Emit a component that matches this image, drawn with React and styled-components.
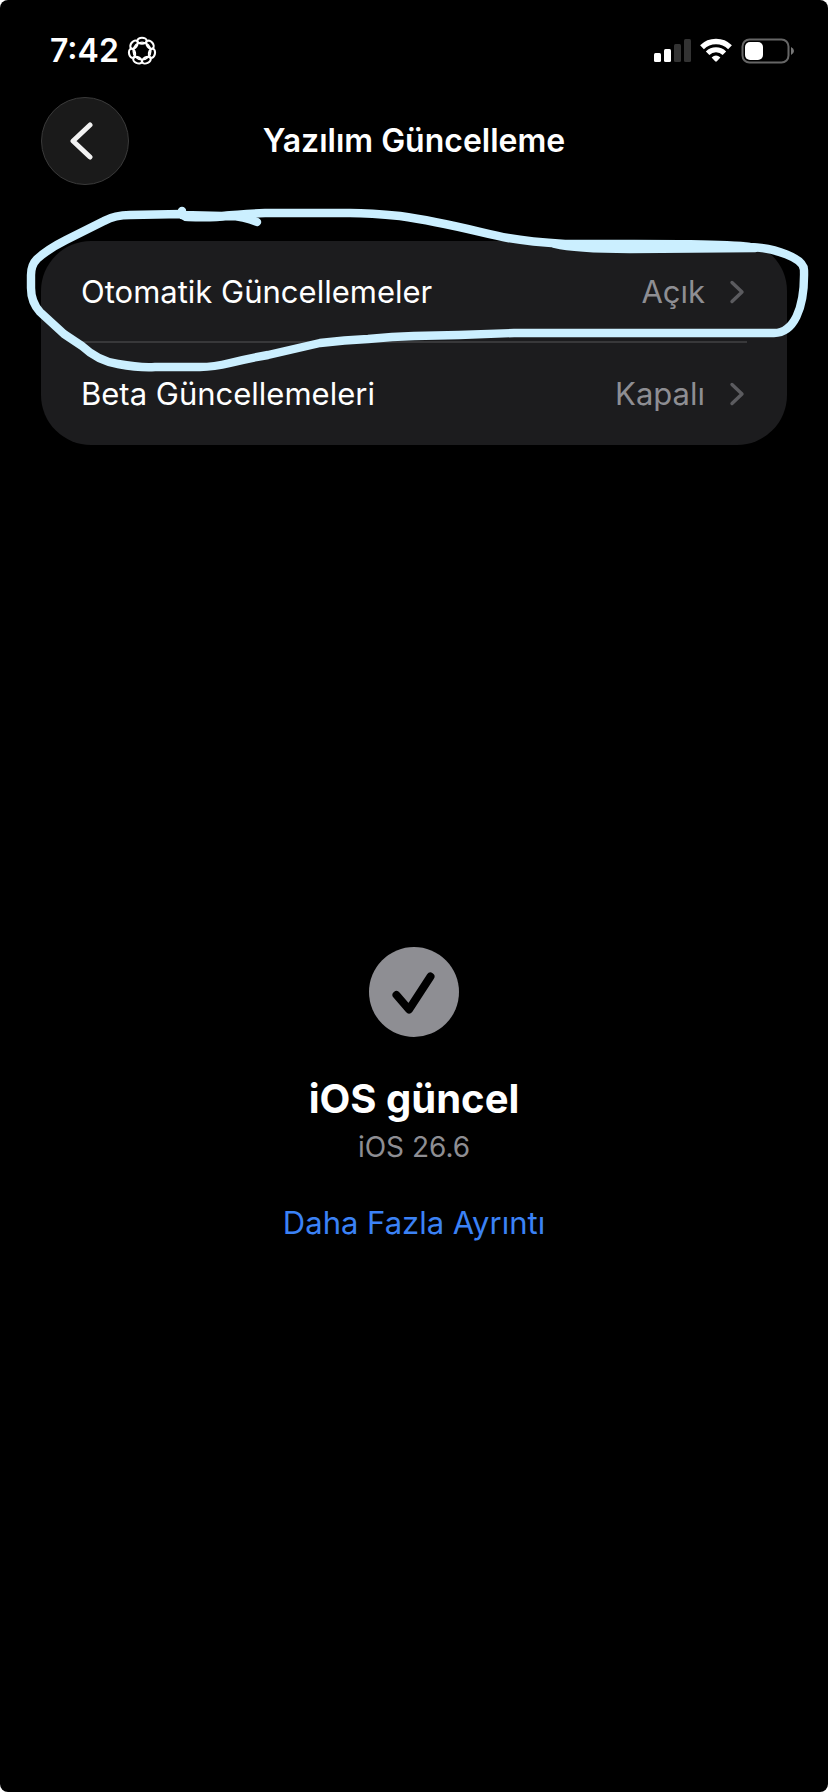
import React from "react";
import styled, { createGlobalStyle } from "styled-components";

const GlobalStyle = createGlobalStyle`
  * {
    box-sizing: border-box;
  }
  body {
    margin: 0;
    background: #fff;
    font-family: Inter, "Liberation Sans", sans-serif;
  }
`;

const rows = [
  { label: "Otomatik Güncellemeler", value: "Açık" },
  { label: "Beta Güncellemeleri", value: "Kapalı" },
];

// ring of seven rounded petals
function Rosette() {
  return (
    <svg width="30" height="30" viewBox="0 0 30 30" fill="none" stroke="#fff">
      {[0, 1, 2, 3, 4, 5, 6].map((n) => (
        <ellipse
          key={n}
          cx="15"
          cy="4.8"
          rx="4.6"
          ry="3"
          strokeWidth="2.1"
          transform={`rotate(${(n * 360) / 7} 15 15)`}
        />
      ))}
      <circle cx="15" cy="15" r="8.9" strokeWidth="1.4" />
    </svg>
  );
}

function StatusIcons() {
  return (
    <Indicators>
      <svg width="37" height="26" viewBox="0 0 37 26" fill="#fff">
        <rect x="0" y="15" width="7" height="9" rx="1.5" />
        <rect x="10" y="11" width="7" height="13" rx="1.5" />
        <rect x="20" y="6" width="7" height="18" rx="1.5" fill="#333" />
        <rect x="30" y="1" width="7" height="23" rx="1.5" fill="#333" />
      </svg>
      <svg width="32" height="26" viewBox="0 0 32 26" fill="none" stroke="#fff">
        <path d="M2 9.2A20 20 0 0 1 30 9.2" strokeWidth="5.4" />
        <path d="M7.6 15.2A12 12 0 0 1 24.4 15.2" strokeWidth="5" />
        <path
          d="M11.6 19.4Q16 15.6 20.4 19.4L16.9 23.3Q16 24.2 15.1 23.3Z"
          fill="#fff"
          stroke="none"
        />
      </svg>
      <svg width="54" height="26" viewBox="0 0 54 26">
        <rect
          x="1.5"
          y="1.5"
          width="46"
          height="23"
          rx="7"
          fill="none"
          stroke="#666"
          strokeWidth="2"
        />
        <rect x="4" y="4" width="18" height="18" rx="5" fill="#fff" />
        <path d="M50 9Q53 10.5 53 13Q53 15.5 50 17Z" fill="#777" />
      </svg>
    </Indicators>
  );
}

function App() {
  return (
    <>
      <GlobalStyle />
      <Screen>
        <StatusBar>
          <Clock>
            7:42
            <Rosette />
          </Clock>
          <StatusIcons />
        </StatusBar>

        <NavBar>
          <BackButton aria-label="Geri">
            <svg width="24" height="40" viewBox="0 0 24 40">
              <path
                d="M20 4L3 20L20 36"
                fill="none"
                stroke="#f2f2f2"
                strokeWidth="5"
                strokeLinecap="round"
                strokeLinejoin="round"
              />
            </svg>
          </BackButton>
          <NavTitle>Yazılım Güncelleme</NavTitle>
        </NavBar>

        <Settings>
          <Card>
            {rows.map((row) => (
              <Row key={row.label}>
                <RowContent>
                  <span>{row.label}</span>
                  <Value>{row.value}</Value>
                  <svg width="18" height="24" viewBox="0 0 18 24">
                    <path
                      d="M3 2.5L13 12L3 21.5"
                      fill="none"
                      stroke="#5b5b5f"
                      strokeWidth="3.4"
                      strokeLinecap="round"
                      strokeLinejoin="round"
                    />
                  </svg>
                </RowContent>
              </Row>
            ))}
          </Card>
          <Scribble viewBox="25 205 788 170">
            <path d="M182 211Q182 217 188 217Q212 218 228 216Q244 216 257 222" />
            <path d="M182 214L130 215Q115 215 104 221L66 240Q48 249 37 259Q31 265 31 275L31 288Q31 302 40 312L64 334L82 346Q98 361 118 364Q140 368 155 367L200 367Q214 367 230 363Q250 358 268 355L320 343Q345 340 368 339L392 337L414 336L459 335L514 333L774 333C793 333 805 310 804 270C804 258 775 248 750 247C720 243 640 244 565 244Q530 242 508 238C485 234 450 223 400 216Q370 213 350 213L265 213Q240 214 222 216L182 215" />
            <path d="M555 244Q575 249 630 249L755 248" />
          </Scribble>
        </Settings>

        <Status>
          <svg width="90" height="90" viewBox="0 0 90 90">
            <circle cx="45" cy="45" r="45" fill="#8e8e93" />
            <path
              d="M27.5 48L40 62.5L61.5 29.5"
              fill="none"
              stroke="#000"
              strokeWidth="8"
              strokeLinecap="round"
              strokeLinejoin="round"
            />
          </svg>
          <h2>iOS güncel</h2>
          <p>iOS 26.6</p>
          <a href="#details">Daha Fazla Ayrıntı</a>
        </Status>
      </Screen>
    </>
  );
}

const Screen = styled.main`
  min-height: 100vh;
  background: #000;
  color: #fff;
  border-radius: 8px;
  overflow: hidden;
`;

const StatusBar = styled.div`
  display: flex;
  justify-content: space-between;
  align-items: center;
  height: 97px;
  padding: 4px 33px 0 50px;
`;

const Clock = styled.div`
  display: flex;
  align-items: center;
  gap: 8px;
  font-size: 32px;
  line-height: 40px;
  font-weight: 600;
`;

const Indicators = styled.div`
  display: flex;
  align-items: center;
  gap: 9px;
`;

const NavBar = styled.header`
  display: grid;
  grid-template-columns: 88px 1fr 88px;
  align-items: center;
  padding: 0 41px;
`;

const BackButton = styled.button`
  display: flex;
  align-items: center;
  justify-content: center;
  width: 88px;
  height: 88px;
  padding: 0 6px 0 0;
  border: 1px solid #3a3a3a;
  border-radius: 50%;
  background: #1a1a1a;
  cursor: pointer;
`;

const NavTitle = styled.h1`
  margin: 0;
  text-align: center;
  font-size: 32px;
  line-height: 40px;
  font-weight: 600;
`;

const Settings = styled.section`
  position: relative;
  margin: 56px 41px 0;
`;

const Card = styled.div`
  border-radius: 50px;
  background: #1c1c1e;
  overflow: hidden;
`;

const RowContent = styled.span`
  display: flex;
  align-items: center;
  height: 102px;
  padding-top: 2px;
  border-bottom: 2px solid #38383a;
`;

const Row = styled.button`
  display: block;
  width: 100%;
  padding: 0 40px;
  border: none;
  background: none;
  color: #fff;
  font-family: inherit;
  font-size: 31px;
  line-height: 40px;
  text-align: left;
  cursor: pointer;
  &:last-child ${RowContent} {
    border-bottom-color: transparent;
  }
`;

const Value = styled.span`
  margin: 0 24px 0 auto;
  color: #8e8e93;
`;

/* pen mark drawn over the card */
const Scribble = styled.svg`
  position: absolute;
  top: -36px;
  left: -16px;
  width: calc(100% + 42px);
  pointer-events: none;
  path {
    fill: none;
    stroke: #cbefff;
    stroke-width: 8.4;
    stroke-linecap: round;
    stroke-linejoin: round;
  }
`;

const Status = styled.section`
  display: flex;
  flex-direction: column;
  align-items: center;
  padding: 502px 40px 40px;
  h2 {
    margin: 34px 0 0;
    font-size: 40px;
    line-height: 56px;
    font-weight: 700;
  }
  p {
    margin: 0;
    font-size: 28px;
    line-height: 40px;
    color: #8e8e93;
  }
  a {
    margin-top: 36px;
    font-size: 31px;
    line-height: 40px;
    color: #3b82f6;
    text-decoration: none;
  }
`;

export default App;
